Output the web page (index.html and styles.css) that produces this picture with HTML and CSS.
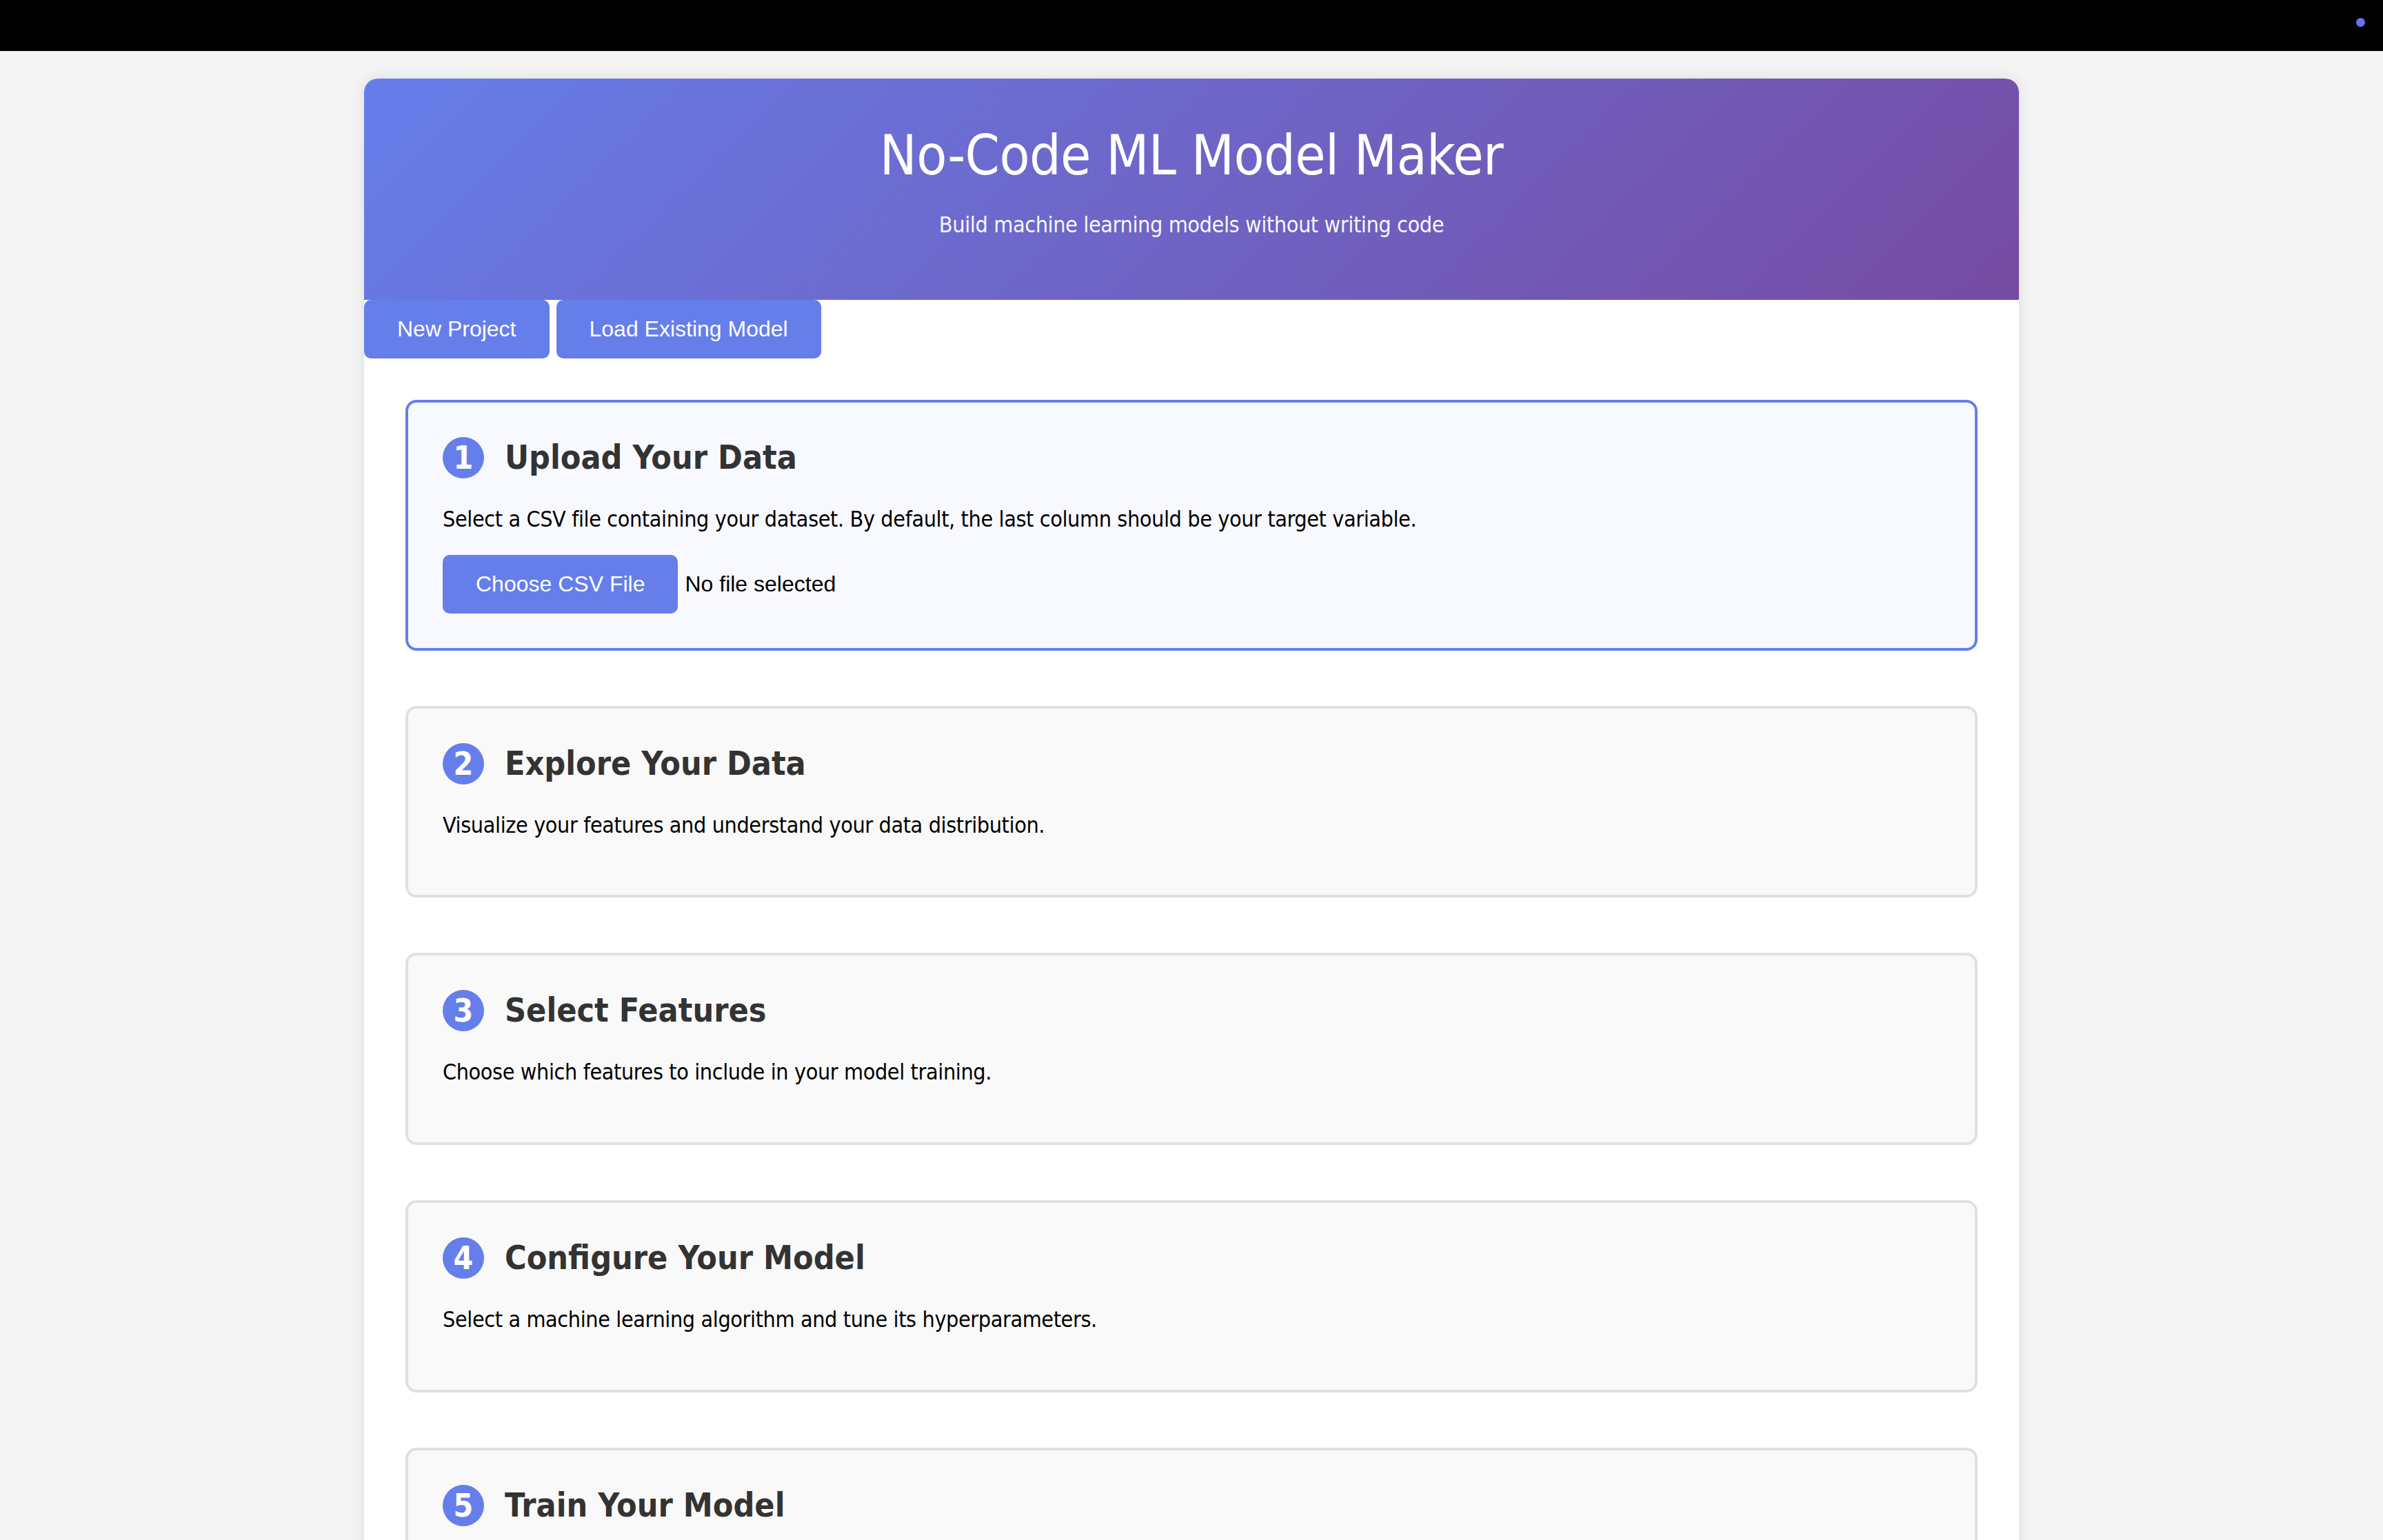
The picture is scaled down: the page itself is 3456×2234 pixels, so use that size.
FILE: index.html
```html
<!DOCTYPE html>
<html lang="en">
<head>
<meta charset="utf-8">
<title>No-Code ML Model Maker</title>
<link rel="stylesheet" href="styles.css">
</head>
<body>
<div class="topbar"><span class="topbar-dot"></span></div>
<div class="container">
  <header class="header">
    <h1 class="title">No-Code ML Model Maker</h1>
    <p class="subtitle">Build machine learning models without writing code</p>
  </header>
  <nav class="tabs">
    <button class="tab-btn">New Project</button>
    <button class="tab-btn">Load Existing Model</button>
  </nav>
  <main class="content">
    <section class="step step-active">
      <div class="step-head"><span class="step-num">1</span><h2 class="step-title">Upload Your Data</h2></div>
      <p class="step-desc">Select a CSV file containing your dataset. By default, the last column should be your target variable.</p>
      <div class="file-row">
        <button class="file-btn">Choose CSV File</button>
        <span class="file-name">No file selected</span>
      </div>
    </section>
    <section class="step">
      <div class="step-head"><span class="step-num">2</span><h2 class="step-title">Explore Your Data</h2></div>
      <p class="step-desc">Visualize your features and understand your data distribution.</p>
    </section>
    <section class="step">
      <div class="step-head"><span class="step-num">3</span><h2 class="step-title">Select Features</h2></div>
      <p class="step-desc">Choose which features to include in your model training.</p>
    </section>
    <section class="step">
      <div class="step-head"><span class="step-num">4</span><h2 class="step-title">Configure Your Model</h2></div>
      <p class="step-desc">Select a machine learning algorithm and tune its hyperparameters.</p>
    </section>
    <section class="step">
      <div class="step-head"><span class="step-num">5</span><h2 class="step-title">Train Your Model</h2></div>
      <p class="step-desc">Train your model and monitor its progress.</p>
    </section>
  </main>
</div>
</body>
</html>
```
FILE: styles.css
```css
html, body {
  margin: 0;
  padding: 0;
}
body {
  background: #f4f4f4;
  font-family: "DejaVu Sans", Verdana, sans-serif;
  font-stretch: condensed;
  line-height: 1.207;
  color: #000;
}
.topbar {
  height: 74px;
  background: #000;
  display: flex;
  justify-content: flex-end;
  align-items: flex-start;
  padding: 26px 26px 0 0;
  box-sizing: border-box;
}
.topbar-dot {
  width: 13px;
  height: 13px;
  border-radius: 50%;
  background: #6b6ff0;
}
.container {
  width: 2400px;
  margin: 40px auto 0;
  background: #fff;
  border-radius: 20px 20px 0 0;
  box-shadow: 0 0 20px rgba(0, 0, 0, 0.1);
  overflow: hidden;
}
.header {
  background: linear-gradient(135deg, #667eea 0%, #764ba2 100%);
  color: #fff;
  text-align: center;
  padding: 64px 60px 58px;
}
.title {
  margin: 0 0 20px;
  font-size: 80px;
  font-weight: normal;
  letter-spacing: -0.5px;
}
.subtitle {
  margin: 32px 0;
  font-size: 32px;
  letter-spacing: -0.35px;
  opacity: 0.95;
}
.tabs {
  display: flex;
  gap: 10px;
}
.tab-btn, .file-btn {
  background: #667eea;
  color: #fff;
  border: none;
  border-radius: 10px;
  padding: 24px 48px;
  font-family: "Liberation Sans", Arial, sans-serif;
  font-size: 32px;
  line-height: normal;
  cursor: pointer;
}
.content {
  padding: 60px;
}
.step {
  border: 4px solid #e0e0e0;
  border-radius: 16px;
  background: #f9f9f9;
  padding: 50px;
  margin-bottom: 80px;
}
.step-active {
  border-color: #667eea;
  background: #f8f9ff;
}
.step-head {
  display: flex;
  align-items: center;
  gap: 30px;
  margin-bottom: 40px;
}
.step-num {
  width: 60px;
  height: 60px;
  border-radius: 50%;
  background: #667eea;
  color: #fff;
  font-weight: bold;
  font-size: 46px;
  line-height: 1;
  display: flex;
  align-items: center;
  justify-content: center;
  flex: none;
}
.step-title {
  margin: 0;
  font-size: 48px;
  font-weight: bold;
  color: #333;
}
.step-desc {
  margin: 0 0 32px;
  font-size: 32px;
  letter-spacing: -0.37px;
}
.file-row {
  display: flex;
  align-items: center;
  gap: 10px;
}
.file-name {
  font-family: "Liberation Sans", Arial, sans-serif;
  font-size: 32px;
}
```
